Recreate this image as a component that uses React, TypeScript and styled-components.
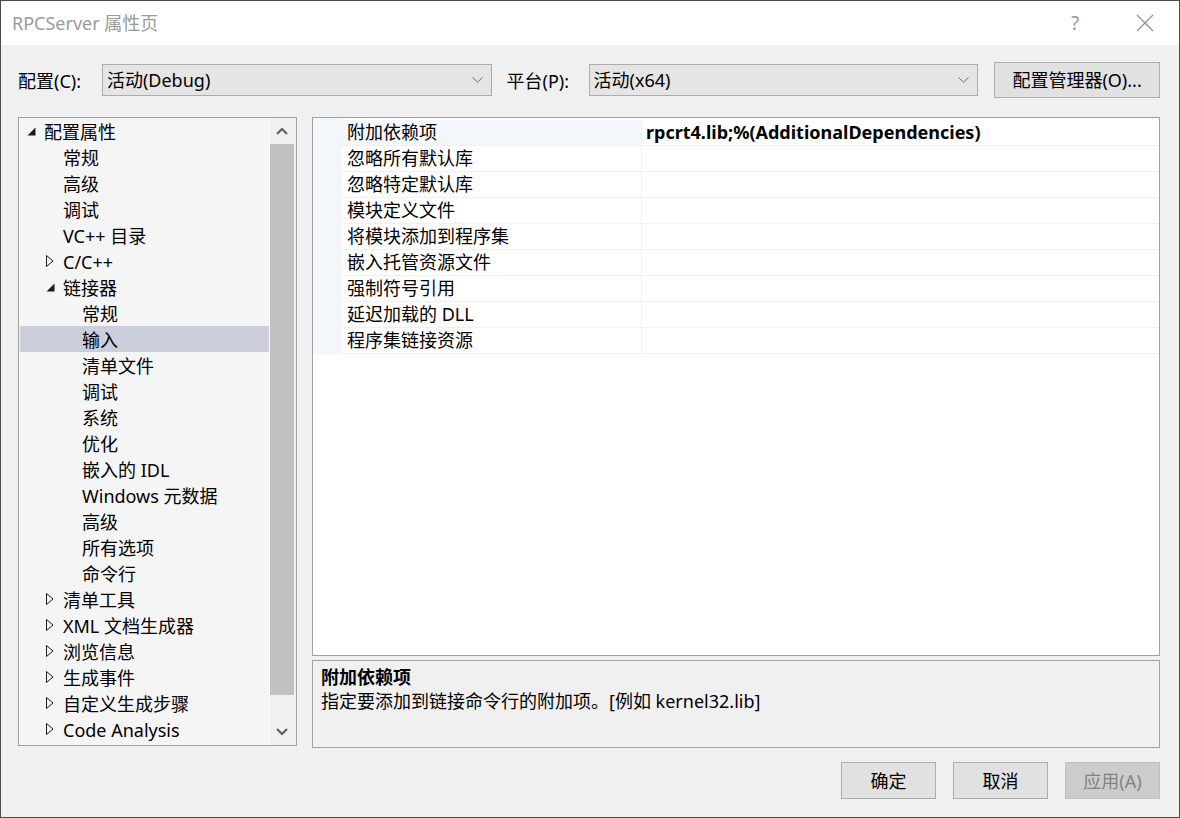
import React from 'react';
import styled, { createGlobalStyle } from 'styled-components';

const FONT = `"Noto Sans", "Noto Sans CJK SC", sans-serif`;

const Global = createGlobalStyle`
  html, body { margin: 0; padding: 0; background: #f0f0f0; }
  body { font-family: ${FONT}; color: #000; }
  * { box-sizing: border-box; }
`;

const Window = styled.div`
  width: 1180px;
  height: 818px;
  border: 1px solid #4b4b4b;
  background: #f0f0f0;
  display: flex;
  flex-direction: column;
  overflow: hidden;
`;

const TitleBar = styled.div`
  height: 44px;
  flex-shrink: 0;
  background: #fff;
  display: flex;
  align-items: center;
  padding-left: 11px;
`;

const Title = styled.div`
  flex: 1;
  font-size: 18px;
  color: #9a9a9a;
  line-height: 24px;
  margin-top: -1px;
`;

const CaptionButton = styled.div<{ $w: number }>`
  width: ${(p) => p.$w}px;
  height: 44px;
  display: flex;
  align-items: center;
  justify-content: center;
  color: #9a9a9a;
  font-size: 19px;
`;

const Body = styled.div`
  flex: 1;
  display: flex;
  flex-direction: column;
  padding: 17px 19px 0 17px;
`;

const Toolbar = styled.div`
  height: 36px;
  display: flex;
  align-items: center;
`;

const FieldLabel = styled.div<{ $w: number; $ml?: number }>`
  width: ${(p) => p.$w}px;
  margin-left: ${(p) => p.$ml ?? 0}px;
  font-size: 18px;
  line-height: 24px;
  padding-top: 1px;
`;

const Combo = styled.div`
  width: 390px;
  height: 32px;
  background: #e5e5e5;
  border: 1px solid #acacac;
  display: flex;
  align-items: center;
  padding-left: 4px;
  padding-right: 8px;
  font-size: 18px;
`;

const ComboText = styled.div`
  flex: 1;
  line-height: 24px;
`;

const Button = styled.div<{ $w: number; $h: number; $ml?: number; $disabled?: boolean }>`
  width: ${(p) => p.$w}px;
  height: ${(p) => p.$h}px;
  margin-left: ${(p) => p.$ml ?? 0}px;
  background: ${(p) => (p.$disabled ? '#cccccc' : '#e1e1e1')};
  border: 1px solid ${(p) => (p.$disabled ? '#bfbfbf' : '#adadad')};
  color: ${(p) => (p.$disabled ? '#838383' : '#000')};
  display: flex;
  align-items: center;
  justify-content: center;
  font-size: 18px;
  line-height: 24px;
`;

const Main = styled.div`
  margin-top: 19px;
  display: flex;
  align-items: flex-start;
  gap: 15px;
`;

const TreePanel = styled.div`
  width: 279px;
  height: 629px;
  border: 1px solid #a0a0a0;
  background: #f5f5f5;
  display: flex;
`;

const TreeList = styled.div`
  flex: 1;
  padding-left: 1px;
  overflow: hidden;
`;

const TreeRow = styled.div<{ $level: number; $selected?: boolean }>`
  height: 26px;
  display: flex;
  align-items: center;
  padding-left: ${(p) => 7 + p.$level * 19}px;
  background: ${(p) => (p.$selected ? '#cccedb' : 'transparent')};
  font-size: 18px;
  white-space: nowrap;
`;

const Toggle = styled.div`
  width: 17px;
  height: 26px;
  display: flex;
  align-items: center;
  flex-shrink: 0;
`;

const TreeText = styled.span`
  line-height: 24px;
  padding-top: 1px;
`;

const ScrollBar = styled.div`
  width: 27px;
  border-left: 1px solid #ffffff;
  background: #f0f0f0;
  display: flex;
  flex-direction: column;
`;

const ScrollArrow = styled.div`
  height: 26px;
  display: flex;
  align-items: center;
  justify-content: center;
  padding-right: 2px;
`;

const ScrollTrack = styled.div`
  flex: 1;
  padding-right: 2px;
`;

const Thumb = styled.div<{ $h: number }>`
  height: ${(p) => p.$h}px;
  background: #c2c2c2;
`;

const RightColumn = styled.div`
  width: 848px;
  display: flex;
  flex-direction: column;
  gap: 4px;
`;

const Grid = styled.div`
  height: 539px;
  border: 1px solid #a0a0a0;
  background: #fff;
`;

const GridRows = styled.div`
  padding-top: 2px;
  background: linear-gradient(to right, #f3f6fb 29px, #ffffff 29px);
`;

const GridRow = styled.div`
  height: 26px;
  display: grid;
  grid-template-columns: 29px 300px 1fr;
  font-size: 18px;
`;

const Gutter = styled.div``;

const NameCell = styled.div<{ $selected?: boolean }>`
  border-right: 1px solid #f0f0f0;
  border-bottom: 1px solid #f0f0f0;
  background: ${(p) => (p.$selected ? '#f3f6fb' : '#fff')};
  padding-left: 5px;
  line-height: 24px;
  white-space: nowrap;
`;

const ValueCell = styled.div`
  border-bottom: 1px solid #f0f0f0;
  padding-left: 4px;
  line-height: 24px;
  font-weight: 700;
  white-space: nowrap;
`;

const Description = styled.div`
  height: 88px;
  border: 1px solid #a0a0a0;
  background: #f0f0f0;
  padding: 4px 8px;
  font-size: 18px;
  line-height: 24px;
`;

const DescTitle = styled.div`
  font-weight: 700;
`;

const Footer = styled.div`
  margin-top: 14px;
  display: flex;
  justify-content: flex-end;
`;

const Expanded = () => (
  <svg width="9" height="9" viewBox="0 0 9 9">
    <polygon points="8.5,0.5 8.5,8.5 0.5,8.5" fill="#1a1a1a" />
  </svg>
);

const Collapsed = () => (
  <svg width="8" height="12" viewBox="0 0 8 12">
    <polygon points="0.5,0.5 7,6 0.5,11.5" fill="none" stroke="#1a1a1a" strokeWidth="1" />
  </svg>
);

const ChevronSmall = () => (
  <svg width="11" height="6" viewBox="0 0 11 6">
    <polyline points="0.5,0.5 5.5,5.2 10.5,0.5" fill="none" stroke="#6d6d6d" strokeWidth="1" />
  </svg>
);

const ScrollChevron = ({ up }: { up?: boolean }) => (
  <svg width="12" height="8" viewBox="0 0 12 8">
    <polyline
      points={up ? '1,7 6,2 11,7' : '1,1 6,6 11,1'}
      fill="none"
      stroke="#606060"
      strokeWidth="2.2"
    />
  </svg>
);

type Node = { label: string; level: number; toggle?: 'open' | 'closed'; selected?: boolean };

const tree: Node[] = [
  { label: '配置属性', level: 0, toggle: 'open' },
  { label: '常规', level: 1 },
  { label: '高级', level: 1 },
  { label: '调试', level: 1 },
  { label: 'VC++ 目录', level: 1 },
  { label: 'C/C++', level: 1, toggle: 'closed' },
  { label: '链接器', level: 1, toggle: 'open' },
  { label: '常规', level: 2 },
  { label: '输入', level: 2, selected: true },
  { label: '清单文件', level: 2 },
  { label: '调试', level: 2 },
  { label: '系统', level: 2 },
  { label: '优化', level: 2 },
  { label: '嵌入的 IDL', level: 2 },
  { label: 'Windows 元数据', level: 2 },
  { label: '高级', level: 2 },
  { label: '所有选项', level: 2 },
  { label: '命令行', level: 2 },
  { label: '清单工具', level: 1, toggle: 'closed' },
  { label: 'XML 文档生成器', level: 1, toggle: 'closed' },
  { label: '浏览信息', level: 1, toggle: 'closed' },
  { label: '生成事件', level: 1, toggle: 'closed' },
  { label: '自定义生成步骤', level: 1, toggle: 'closed' },
  { label: 'Code Analysis', level: 1, toggle: 'closed' },
];

const props: { name: string; value?: string; selected?: boolean }[] = [
  { name: '附加依赖项', value: 'rpcrt4.lib;%(AdditionalDependencies)', selected: true },
  { name: '忽略所有默认库' },
  { name: '忽略特定默认库' },
  { name: '模块定义文件' },
  { name: '将模块添加到程序集' },
  { name: '嵌入托管资源文件' },
  { name: '强制符号引用' },
  { name: '延迟加载的 DLL' },
  { name: '程序集链接资源' },
];

export default function App() {
  return (
    <>
      <Global />
      <Window>
        <TitleBar>
          <Title>RPCServer 属性页</Title>
          <CaptionButton $w={70}>?</CaptionButton>
          <CaptionButton $w={69}>
            <svg width="18" height="18" viewBox="0 0 18 18">
              <path d="M1 1 L17 17 M17 1 L1 17" stroke="#8a8a8a" strokeWidth="1.1" fill="none" />
            </svg>
          </CaptionButton>
        </TitleBar>
        <Body>
          <Toolbar>
            <FieldLabel $w={84}>配置(C):</FieldLabel>
            <Combo>
              <ComboText>活动(Debug)</ComboText>
              <ChevronSmall />
            </Combo>
            <FieldLabel $w={82} $ml={15}>平台(P):</FieldLabel>
            <Combo>
              <ComboText>活动(x64)</ComboText>
              <ChevronSmall />
            </Combo>
            <Button $w={166} $h={36} $ml={16}>配置管理器(O)...</Button>
          </Toolbar>
          <Main>
            <TreePanel>
              <TreeList>
                {tree.map((n, i) => (
                  <TreeRow key={i} $level={n.level} $selected={n.selected}>
                    <Toggle>
                      {n.toggle === 'open' && <Expanded />}
                      {n.toggle === 'closed' && <Collapsed />}
                    </Toggle>
                    <TreeText>{n.label}</TreeText>
                  </TreeRow>
                ))}
              </TreeList>
              <ScrollBar>
                <ScrollArrow>
                  <ScrollChevron up />
                </ScrollArrow>
                <ScrollTrack>
                  <Thumb $h={551} />
                </ScrollTrack>
                <ScrollArrow>
                  <ScrollChevron />
                </ScrollArrow>
              </ScrollBar>
            </TreePanel>
            <RightColumn>
              <Grid>
                <GridRows>
                  {props.map((p, i) => (
                    <GridRow key={i}>
                      <Gutter />
                      <NameCell $selected={p.selected}>{p.name}</NameCell>
                      <ValueCell>{p.value ?? ''}</ValueCell>
                    </GridRow>
                  ))}
                </GridRows>
              </Grid>
              <Description>
                <DescTitle>附加依赖项</DescTitle>
                <div>指定要添加到链接命令行的附加项。[例如 kernel32.lib]</div>
              </Description>
            </RightColumn>
          </Main>
          <Footer>
            <Button $w={95} $h={37}>确定</Button>
            <Button $w={95} $h={37} $ml={17}>取消</Button>
            <Button $w={95} $h={37} $ml={17} $disabled>应用(A)</Button>
          </Footer>
        </Body>
      </Window>
    </>
  );
}
